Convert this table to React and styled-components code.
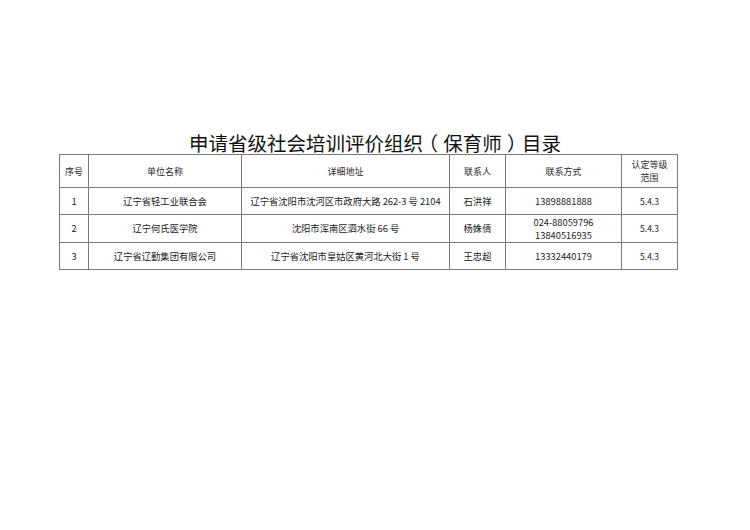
import React from 'react';
import styled, { createGlobalStyle } from 'styled-components';

const rows = [
  { no: '1', name: '辽宁省轻工业联合会', addr: '辽宁省沈阳市沈河区市政府大路 262-3 号 2104', person: '石洪祥', phone: ['13898881888'], level: '5.4.3' },
  { no: '2', name: '辽宁何氏医学院', addr: '沈阳市浑南区泗水街 66 号', person: '杨姝倩', phone: ['024-88059796', '13840516935'], level: '5.4.3' },
  { no: '3', name: '辽宁省辽勤集团有限公司', addr: '辽宁省沈阳市皇姑区黄河北大街 1 号', person: '王忠超', phone: ['13332440179'], level: '5.4.3' },
];

const cols = [29, 153, 208, 56, 116, 56];

function App() {
  return (
    <Page>
      <GlobalStyle />
      <Title>
        申请省级社会培训评价组织<Paren>（</Paren>保育师<Paren>）</Paren>目录
      </Title>
      <Table>
        <colgroup>
          {cols.map((w, i) => <col key={i} style={{ width: w }} />)}
        </colgroup>
        <thead>
          <HeadRow>
            <Th>序号</Th>
            <Th>单位名称</Th>
            <Th>详细地址</Th>
            <Th>联系人</Th>
            <Th>联系方式</Th>
            <Th>认定等级<br />范围</Th>
          </HeadRow>
        </thead>
        <tbody>
          {rows.map((r) => (
            <Row key={r.no} tall={r.phone.length > 1}>
              <Td>{r.no}</Td>
              <Td>{r.name}</Td>
              <Td>{r.addr}</Td>
              <Td>{r.person}</Td>
              <Td>
                {r.phone.map((p) => <Line key={p}>{p}</Line>)}
              </Td>
              <Td small>{r.level}</Td>
            </Row>
          ))}
        </tbody>
      </Table>
    </Page>
  );
}

export default App;

const GlobalStyle = createGlobalStyle`
  body {
    margin: 0;
    background: #fff;
  }
`;

const Page = styled.div`
  width: 750px;
  height: 530px;
  box-sizing: border-box;
  padding: 131px 0 0 59px;
  font-family: "Noto Sans CJK SC", "Noto Sans", sans-serif;
  color: #1e1e1e;
`;

const Title = styled.div`
  width: 632px;
  text-align: center;
  font-size: 19.5px;
  line-height: 23px;
  color: #111;
`;

// full-width brackets drawn centred in their cell, as in the scan
const Paren = styled.span`
  font-feature-settings: "halt";
  padding: 0 0.27em;
`;

const Table = styled.table`
  width: 618px;
  table-layout: fixed;
  border-collapse: collapse;
  border: 1px solid #6e6e6e;
`;

const HeadRow = styled.tr`
  height: 33px;
`;

const Row = styled.tr`
  height: ${(p) => (p.tall ? '28px' : '27px')};
`;

const Th = styled.th`
  border: 1px solid #7a7a7a;
  padding: 0;
  font-weight: normal;
  font-size: 9px;
  line-height: 13px;
  text-align: center;
  vertical-align: middle;
  color: #2a2a2a;
`;

const Td = styled.td`
  border: 1px solid #7a7a7a;
  padding: 0;
  font-size: ${(p) => (p.small ? '8.5px' : '9.3px')};
  line-height: 13px;
  text-align: center;
  vertical-align: middle;
  white-space: nowrap;
  color: #222;
`;

const Line = styled.div`
  line-height: 12.5px;
`;
